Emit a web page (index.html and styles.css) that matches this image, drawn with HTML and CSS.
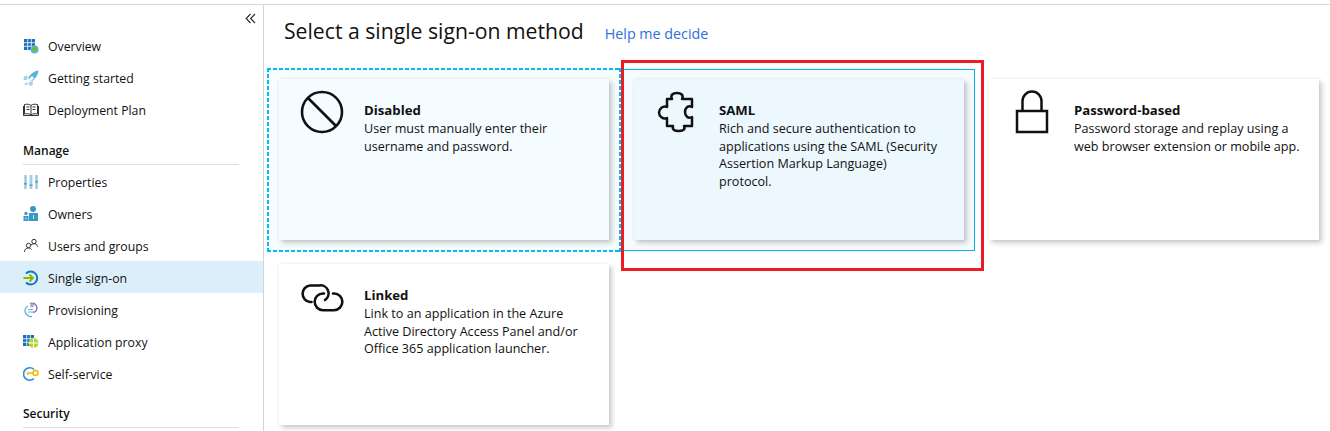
FILE: index.html
```html
<!DOCTYPE html>
<html lang="en">
<head>
    <meta charset="UTF-8">
    <title>Single sign-on</title>
    <link rel="stylesheet" href="styles.css">
</head>
<body>
    <div class="page">
        <aside class="sidebar">
            <div class="collapse-row">
                <svg class="collapse-icon" width="11" height="11" viewBox="0 0 11 11"><path d="M5.500 1 1.200 5.500 5.500 10M10 1 5.700 5.500 10 10" fill="none" stroke="#333" stroke-width="1.200"/></svg>
            </div>

            <a class="nav-item">
                <svg class="nav-icon" viewBox="0 0 16 16"><rect x="1" y="1" width="11" height="11" fill="#1a6fc0"/><path d="M1 4.700h11M1 8.300h11M4.700 1v11M8.300 1v11" stroke="#fff" stroke-width=".8"/><circle cx="11.500" cy="11.500" r="4" fill="#59b4d9"/><path d="M9 10c2-2 4-1 5 0l-2 3-2 0z" fill="#7fba00"/></svg>
                <span>Overview</span>
            </a>
            <a class="nav-item">
                <svg class="nav-icon" viewBox="0 0 16 16"><path d="M15.500 .5C11 1 7.500 4 5 8l3.500 3.500C12 9 15 5.500 15.500 .5z" fill="#59b4d9"/><path d="M9 6l2 2-3 3-2-2z" fill="#fff"/><path d="M4.500 5.500 1 6.500 .5 10H4zM10 11.500 9.500 15.500 6 15.500V12z" fill="#a0d3ea"/><path d="M1 15l3-3 1 1-1 2z" fill="#a0d3ea"/></svg>
                <span>Getting started</span>
            </a>
            <a class="nav-item">
                <svg class="nav-icon" viewBox="0 0 16 16"><path d="M8 3.500C6.500 2 4 2 1.500 2.500V12C4 11.500 6.500 11.500 8 13c1.500-1.500 4-1.500 6.500-1V2.500C12 2 9.500 2 8 3.500zM8 3.500V13M.5 4v9.500h15V4M3.500 5h3M3.500 7.500h3M9.500 5h3M9.500 7.500h3" fill="none" stroke="#333" stroke-width="1"/></svg>
                <span>Deployment Plan</span>
            </a>

            <h4 class="nav-heading">Manage</h4>
            <a class="nav-item">
                <svg class="nav-icon" viewBox="0 0 16 16"><path d="M1 1h3v14H1zM6.500 1h3v14h-3zM12 1h3v14h-3z" fill="#b3dcef"/><path d="M2.500 1v14M8 1v14M13.500 1v14" stroke="#8fb6c9" stroke-width=".7"/><rect x="1" y="9" width="3" height="1.500" fill="#5a9fc4"/><rect x="6.500" y="10.500" width="3" height="1.500" fill="#5a9fc4"/><rect x="12" y="7" width="3" height="1.500" fill="#5a9fc4"/></svg>
                <span>Properties</span>
            </a>
            <a class="nav-item">
                <svg class="nav-icon" viewBox="0 0 16 16"><circle cx="10" cy="3" r="3" fill="#3999c6"/><path d="M6 7h9v8H6z" fill="#3999c6"/><circle cx="3" cy="7.500" r="1.700" fill="#3999c6"/><path d="M.5 10h5v5h-5z" fill="#3999c6"/><path d="M3 11.500v2M10.500 9v4" stroke="#fff" stroke-width=".8"/></svg>
                <span>Owners</span>
            </a>
            <a class="nav-item">
                <svg class="nav-icon" viewBox="0 0 16 16"><circle cx="5.500" cy="7.500" r="2.200" fill="none" stroke="#333"/><path d="M1.500 14c0-2.500 1.500-4 4-4 1.200 0 2.200.5 3 1.500" fill="none" stroke="#333"/><circle cx="11" cy="3.500" r="2.200" fill="none" stroke="#333"/><path d="M8 7c.8-.8 1.800-1.300 3-1.300 2 0 3.300 1.200 3.500 3" fill="none" stroke="#333"/></svg>
                <span>Users and groups</span>
            </a>
            <a class="nav-item is-active">
                <svg class="nav-icon" viewBox="0 0 16 16"><path d="M3 3.500A6.500 6.500 0 1 1 3 12.500" fill="none" stroke="#0f78c7" stroke-width="2"/><path d="M.5 8h9M6.500 4.500 10 8l-3.500 3.500" fill="none" stroke="#7fba00" stroke-width="1.800"/></svg>
                <span>Single sign-on</span>
            </a>
            <a class="nav-item">
                <svg class="nav-icon" viewBox="0 0 16 16"><path d="M7 1.500A5 5 0 0 1 14 6a5 5 0 0 1-4 4.500" fill="none" stroke="#8a6bb8" stroke-width="1.300"/><circle cx="9" cy="3.500" r="2" fill="#b9a3d6"/><path d="M9 14.500A6 6 0 0 1 2 8a5 5 0 0 1 3-4" fill="none" stroke="#59b4d9" stroke-width="1.300"/><path d="M5 10h6M5 7.500h5" stroke="#59b4d9" stroke-width="1"/></svg>
                <span>Provisioning</span>
            </a>
            <a class="nav-item">
                <svg class="nav-icon" viewBox="0 0 16 16"><rect x="0" y="1" width="11" height="11" fill="#1a6fc0"/><path d="M0 4.700h11M0 8.300h11M3.700 1v11M7.300 1v11" stroke="#fff" stroke-width=".8"/><circle cx="10.500" cy="9" r="5" fill="#b8d432"/><path d="M10.500 4v10M5.500 9h10" stroke="#fff" stroke-width="1"/></svg>
                <span>Application proxy</span>
            </a>
            <a class="nav-item">
                <svg class="nav-icon" viewBox="0 0 16 16"><path d="M11 3.500A6.200 6.200 0 1 0 11 12.500" fill="none" stroke="#2a8fd8" stroke-width="1.600"/><circle cx="12.500" cy="7" r="2.500" fill="none" stroke="#f5b800" stroke-width="1.600"/><path d="M10 7H4.500v2" fill="none" stroke="#f5b800" stroke-width="1.500"/></svg>
                <span>Self-service</span>
            </a>

            <h4 class="nav-heading">Security</h4>
        </aside>

        <main class="content">
            <div class="title-row">
                <h1>Select a single sign-on method</h1>
                <a class="help-link">Help me decide</a>
            </div>

            <div class="method-grid">
                <div class="method method-dashed">
                    <div class="card card-disabled">
                        <svg class="card-icon" viewBox="0 0 44 44"><circle cx="22" cy="22" r="20" fill="none" stroke="#111" stroke-width="2.600"/><path d="M8 8l28 28" stroke="#111" stroke-width="2.600"/></svg>
                        <div class="card-text">
                            <h3>Disabled</h3>
                            <p>User must manually enter their<br>username and password.</p>
                        </div>
                    </div>
                </div>

                <div class="method method-selected">
                    <div class="card card-saml">
                        <svg class="card-icon" viewBox="0 0 44 44"><path d="M12 9H17C15 5 18 3 22 3 26 3 29 5 27 9H37V17C33 15 30 18 30 22 30 26 33 29 37 27V36H29C31 40 27 41 23.500 41 20 41 17 40 18 36H12V28C8 30 4 26 4 22.500 4 19 8 15 12 17Z" fill="none" stroke="#111" stroke-width="2.500" stroke-linejoin="round"/></svg>
                        <div class="card-text">
                            <h3>SAML</h3>
                            <p>Rich and secure authentication to<br>applications using the SAML (Security<br>Assertion Markup Language)<br>protocol.</p>
                        </div>
                    </div>
                </div>

                <div class="method">
                    <div class="card">
                        <svg class="card-icon" viewBox="0 0 44 44"><path d="M12.500 20V11a9.500 9.500 0 0 1 19 0V20" fill="none" stroke="#111" stroke-width="2.500"/><rect x="7" y="21" width="30" height="21" fill="none" stroke="#111" stroke-width="2.500"/></svg>
                        <div class="card-text">
                            <h3>Password-based</h3>
                            <p>Password storage and replay using a<br>web browser extension or mobile app.</p>
                        </div>
                    </div>
                </div>

                <div class="method">
                    <div class="card">
                        <svg class="card-icon" viewBox="0 0 44 44"><path d="M11.500 27H10A8.300 8.300 0 0 1 10 10.500H19A8 8 0 0 1 25 25M33 18.500H34A8.300 8.300 0 0 1 34 35.200H23A8.300 8.300 0 0 1 23 18.500H24" fill="none" stroke="#111" stroke-width="2.600" stroke-linecap="round"/></svg>
                        <div class="card-text">
                            <h3>Linked</h3>
                            <p>Link to an application in the Azure<br>Active Directory Access Panel and/or<br>Office 365 application launcher.</p>
                        </div>
                    </div>
                </div>
            </div>
        </main>

        <div class="red-outline"></div>
    </div>
</body>
</html>
```

FILE: styles.css
```css
* {
    margin: 0;
    padding: 0;
    box-sizing: border-box;
}

html, body {
    height: 431px;
    overflow: hidden;
    background: white;
}

body {
    font-family: "Open Sans", "Noto Sans", sans-serif;
    font-size: 12.25px;
    color: #111;
    padding-top: 4px;
}

.page {
    position: relative;
    display: flex;
    height: 427px;
    border-top: 1px solid #d9d9d9;
    overflow: hidden;
}

.sidebar {
    width: 264px;
    flex-shrink: 0;
    border-right: 1px solid #d4d4d4;
}

.collapse-row {
    height: 25px;
    display: flex;
    justify-content: flex-end;
    padding: 8px 7px 0 0;
}

.collapse-icon {
    display: block;
}

.nav-item {
    display: flex;
    align-items: center;
    gap: 9px;
    height: 32px;
    padding-left: 23px;
}

.nav-heading ~ .nav-item {
    padding-top: 2px;
}

.nav-item.is-active {
    background: #ddeefb;
}

.nav-icon {
    width: 16px;
    height: 16px;
    flex-shrink: 0;
}

.nav-heading {
    height: 39px;
    margin: 0 24px 0 23px;
    padding-top: 16px;
    font-size: 12px;
    font-weight: 600;
    line-height: 17px;
    border-bottom: 1px solid #ddd;
}

.content {
    flex: 1;
    padding-left: 4px;
}

.title-row {
    display: flex;
    align-items: baseline;
    gap: 21px;
    height: 64px;
    padding: 11px 0 0 16px;
}

.title-row h1 {
    font-size: 21.2px;
    font-weight: 400;
    line-height: 30px;
}

.help-link {
    font-size: 14.3px;
    color: #2d6fdc;
}

.method-grid {
    display: grid;
    grid-template-columns: repeat(3, 352px);
    grid-auto-rows: 182px;
    gap: 3px;
}

.method {
    padding: 8px 9px 9px;
    border: 2px solid transparent;
}

/* finer dashes than border-style gives */
.method-dashed {
    border: 0;
    margin: -1px;
    padding: 11px 12px 12px;
    background:
        linear-gradient(90deg, #00bcf2 4px, transparent 4px) 0 0 / 6px 2px repeat-x,
        linear-gradient(90deg, #00bcf2 4px, transparent 4px) 0 100% / 6px 2px repeat-x,
        linear-gradient(#00bcf2 4px, transparent 4px) 0 0 / 2px 6px repeat-y,
        linear-gradient(#00bcf2 4px, transparent 4px) 100% 0 / 2px 6px repeat-y,
        #f7fdff;
}

.method-selected {
    padding: 9px 10px 10px;
    border: 1px solid #00b7e8;
    background: #f5fbff;
}

.card {
    display: flex;
    gap: 20px;
    height: 161px;
    padding: 11px 0 0 21px;
    background: white;
    box-shadow: 3px 3px 5px rgba(0, 0, 0, 0.2), 0 0 3px rgba(0, 0, 0, 0.08);
}

.card-disabled {
    background: #f4fcff;
}

.card-saml {
    background: #ecf7fe;
}

.card-icon {
    width: 44px;
    height: 44px;
    flex-shrink: 0;
}

.card-text {
    padding-top: 11px;
    white-space: nowrap;
}

.card-text h3 {
    font-size: 13.2px;
    font-weight: 700;
    line-height: 18px;
    margin-bottom: 1px;
}

.card-text p {
    font-size: 12.6px;
    line-height: 17.5px;
}

.red-outline {
    position: absolute;
    left: 621px;
    top: 55px;
    width: 363px;
    height: 211px;
    border: 3px solid #ed1c24;
    pointer-events: none;
}
```
